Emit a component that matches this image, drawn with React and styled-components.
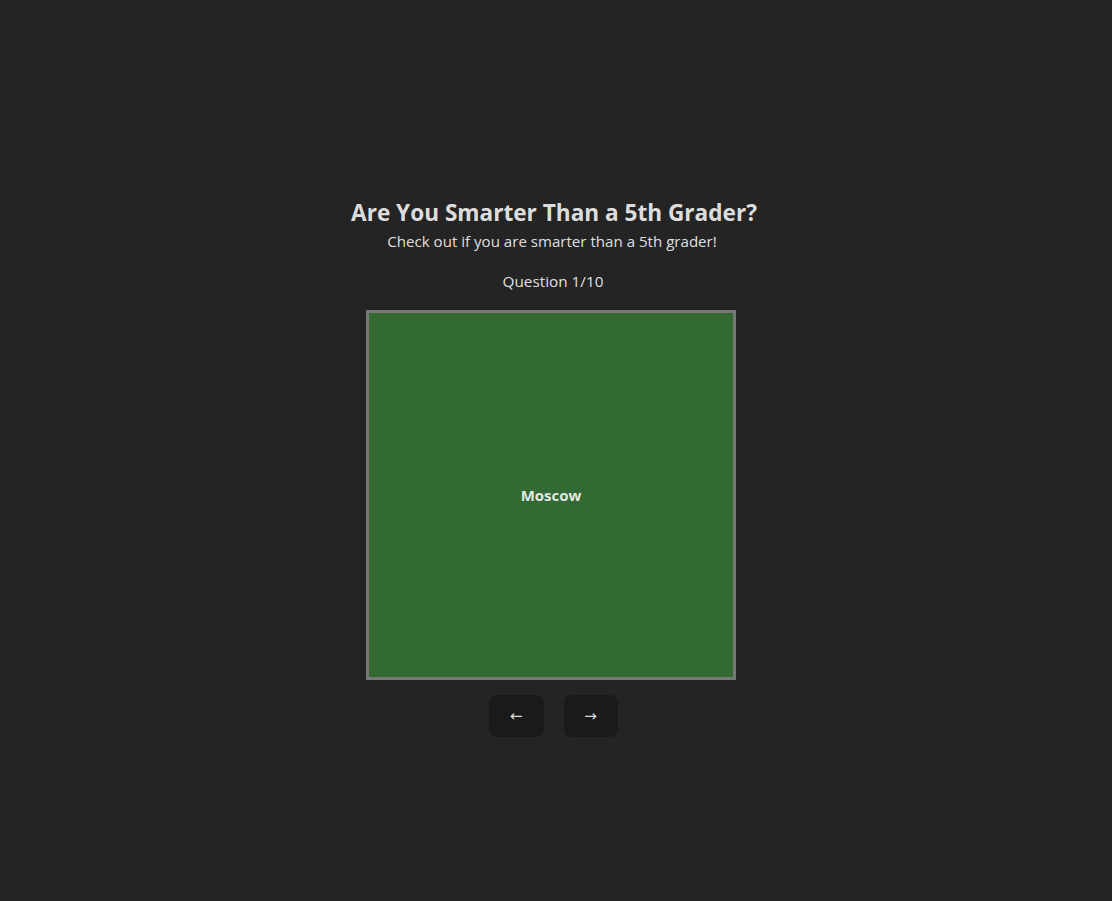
import React, { useState } from "react";
import styled, { createGlobalStyle } from "styled-components";

const GlobalStyle = createGlobalStyle`
  html, body {
    margin: 0;
    padding: 0;
    background: #242424;
  }
  body {
    font-family: "Open Sans", "Noto Sans", sans-serif;
    color: rgba(255, 255, 255, 0.87);
    min-height: 901px;
  }
`;

const Page = styled.main`
  display: flex;
  flex-direction: column;
  align-items: center;
  padding-top: 198px;
  padding-right: 10px;
`;

const Title = styled.h1`
  margin: 0 0 0 6px;
  font-size: 22.6px;
  font-weight: 700;
  line-height: 30px;
`;

const Subtitle = styled.p`
  margin: 0 0 0 2px;
  font-size: 15.1px;
  line-height: 26px;
`;

const Counter = styled.p`
  margin: 14px 0 0 4px;
  font-size: 15.3px;
  line-height: 26px;
`;

const Card = styled.button`
  margin-top: 16px;
  width: 370px;
  height: 370px;
  box-sizing: border-box;
  border: 3px solid #777777;
  background: #336933;
  color: rgba(255, 255, 255, 0.87);
  font-family: inherit;
  font-size: 15px;
  font-weight: 700;
  display: flex;
  align-items: center;
  justify-content: center;
  cursor: pointer;
  padding: 0;
`;

const Controls = styled.div`
  display: flex;
  gap: 20px;
  margin: 15px 0 0 4px;
`;

const NavButton = styled.button`
  width: ${(p) => p.$w}px;
  height: 42px;
  border: none;
  border-radius: 8px;
  background: #1a1a1a;
  color: rgba(255, 255, 255, 0.87);
  font-family: "DejaVu Sans", sans-serif;
  font-size: 15px;
  cursor: pointer;
`;

const cards = [
  { q: "What is the capital of Russia?", a: "Moscow" },
];

export default function App() {
  const [index, setIndex] = useState(0);
  const [flipped, setFlipped] = useState(true);
  const card = cards[index % cards.length];

  return (
    <>
      <GlobalStyle />
      <Page>
        <Title>Are You Smarter Than a 5th Grader?</Title>
        <Subtitle>Check out if you are smarter than a 5th grader!</Subtitle>
        <Counter>Question {index + 1}/10</Counter>
        <Card onClick={() => setFlipped(!flipped)}>
          {flipped ? card.a : card.q}
        </Card>
        <Controls>
          <NavButton $w={55} onClick={() => setIndex(Math.max(0, index - 1))}>
            ←
          </NavButton>
          <NavButton $w={54} onClick={() => setIndex(Math.min(9, index + 1))}>
            →
          </NavButton>
        </Controls>
      </Page>
    </>
  );
}
